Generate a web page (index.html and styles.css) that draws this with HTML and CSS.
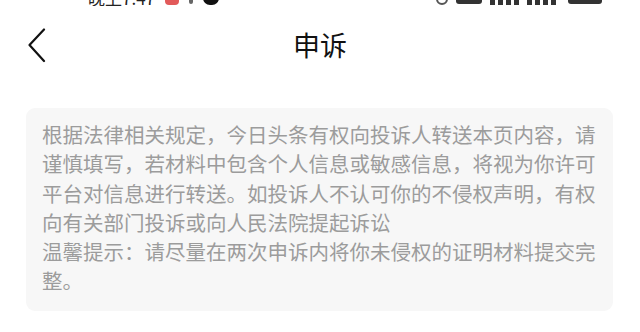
FILE: index.html
```html
<!DOCTYPE html>
<html lang="zh">
<head>
<meta charset="utf-8">
<title>申诉</title>
<link rel="stylesheet" href="styles.css">
</head>
<body>
<div class="status">
  <div class="status-left">
    <span class="time">晚上7:47</span>
    <span class="red-badge"></span>
    <span class="dot"></span>
    <span class="blob"></span>
  </div>
  <div class="status-right">
    <span class="ico-a"></span>
    <span class="ico-b"></span>
    <span class="bars"><i></i><i></i><i></i><i></i></span>
    <span class="bars"><i></i><i></i><i></i><i></i></span>
    <span class="battery"></span>
  </div>
</div>
<header class="nav">
  <svg class="back" width="20" height="36" viewBox="0 0 20 36">
    <path d="M17 1.5 L2.5 17 L17 33" fill="none" stroke="#111" stroke-width="2.2" stroke-linecap="round" stroke-linejoin="round"/>
  </svg>
  <h1 class="title">申诉</h1>
</header>
<section class="notice">
  <p>根据法律相关规定，今日头条有权向投诉人转送本页内容，请谨慎填写，若材料中包含个人信息或敏感信息，将视为你许可平台对信息进行转送。如投诉人不认可你的不侵权声明，有权向有关部门投诉或向人民法院提起诉讼</p>
  <p>温馨提示：请尽量在两次申诉内将你未侵权的证明材料提交完整。</p>
</section>
</body>
</html>
```

FILE: styles.css
```css
html, body {
  margin: 0;
  padding: 0;
  background: #ffffff;
}
body {
  width: 640px;
  height: 332px;
  overflow: hidden;
  font-family: "Noto Sans CJK SC", "Noto Sans", sans-serif;
}
.status {
  height: 6px;
  overflow: hidden;
  display: flex;
  justify-content: space-between;
  align-items: flex-end;
  padding: 0 38px 0 88px;
}
.status-left, .status-right {
  display: flex;
  align-items: flex-end;
  gap: 10px;
}
.time {
  font-size: 17px;
  line-height: 18px;
  height: 18px;
  color: #222;
  display: block;
  margin-bottom: -1px;
}
.red-badge {
  width: 14px;
  height: 12px;
  border-radius: 4px;
  background: #e25a5a;
  margin-bottom: 1px;
}
.dot {
  width: 4px;
  height: 8px;
  border-radius: 2px;
  background: #666;
  margin-bottom: 2px;
}
.blob {
  width: 16px;
  height: 14px;
  border-radius: 7px;
  background: #111;
  margin-bottom: 1px;
}
.status-right { gap: 8px; }
.ico-a {
  width: 12px;
  height: 12px;
  border-radius: 6px;
  border: 2px solid #555;
  box-sizing: border-box;
  margin-bottom: 1px;
}
.ico-b {
  width: 26px;
  height: 12px;
  border-radius: 3px;
  background: #333;
  margin-bottom: 2px;
}
.bars {
  display: flex;
  align-items: flex-end;
  gap: 3px;
  margin-bottom: 1px;
}
.bars i {
  display: block;
  width: 5px;
  height: 14px;
  background: #333;
}
.battery {
  width: 34px;
  height: 12px;
  border-radius: 3px;
  background: #333;
  margin-bottom: 2px;
  margin-left: 4px;
}
.nav {
  height: 78px;
  display: flex;
  align-items: center;
  justify-content: center;
  position: relative;
}
.back {
  position: absolute;
  left: 27px;
  top: 22px;
}
.title {
  margin: 0;
  font-size: 27px;
  font-weight: 400;
  color: #111;
  line-height: 1;
  margin-top: -2px;
}
.notice {
  margin: 24px 27px 0 26px;
  background: #f7f7f7;
  border-radius: 9px;
  padding: 12px 16px 15px 16px;
}
.notice p {
  margin: 0;
  font-size: 20.5px;
  line-height: 29.3px;
  color: #9c9c9c;
}
```
